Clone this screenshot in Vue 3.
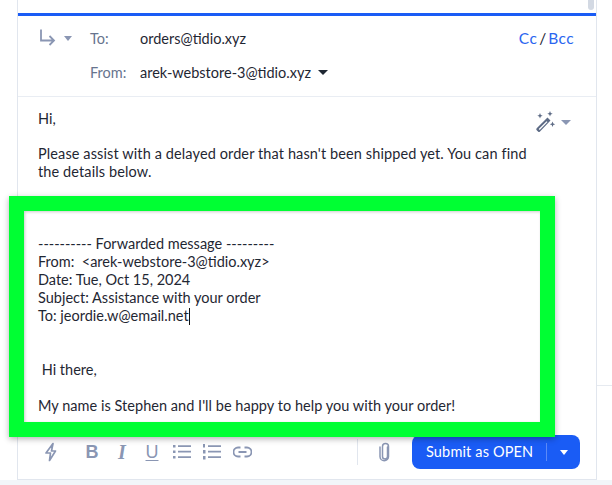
<script setup>
const forwarded = [
  '---------- Forwarded message ---------',
  'From:  <arek-webstore-3@tidio.xyz>',
  'Date: Tue, Oct 15, 2024',
  'Subject: Assistance with your order',
]
</script>

<template>
  <div class="page">
    <div class="scrollbar"></div>
    <div class="side-line"></div>
    <main class="card">
      <header class="recipients">
        <div class="row to-row">
          <div class="reply">
            <svg width="18" height="18" viewBox="0 0 18 18" fill="none" stroke="#8a96b3" stroke-width="1.8">
              <path d="M2 0.500V11.500H15M10.500 7l4.500 4.500-4.500 4.500" />
            </svg>
            <span class="caret grey"></span>
          </div>
          <span class="label">To:</span>
          <span class="value">orders@tidio.xyz</span>
          <span class="cc"><b>Cc</b><i>/</i><b>Bcc</b></span>
        </div>
        <div class="row from-row">
          <span class="label">From:</span>
          <span class="value">arek-webstore-3@tidio.xyz</span>
          <span class="caret dark"></span>
        </div>
      </header>
      <section class="body">
        <div class="hi-row">
          <p>Hi,</p>
          <div class="magic">
            <svg width="24" height="22" viewBox="0 0 24 22" fill="#5d6b85">
              <path d="M15.500 6.500l3 3L8 20.500a1.400 1.400 0 0 1-2 0l-1.300-1.300a1.400 1.400 0 0 1 0-2zM14.600 10.200l-7.900 7.800 1 1 7.800-7.900z" fill-rule="evenodd" />
              <path d="M8 2l.8 1.900 1.900.8-1.900.8L8 7.400l-.8-1.900-1.900-.8 1.900-.8zM18 0l.8 1.900 1.900.8-1.900.8-.8 1.900-.8-1.900-1.900-.8 1.900-.8zM20.500 10.500l.8 1.900 1.900.8-1.900.8-.8 1.900-.8-1.900-1.900-.8 1.900-.8z" />
            </svg>
            <span class="caret grey"></span>
          </div>
        </div>
        <p class="request">Please assist with a delayed order that hasn't been shipped yet. You can find the details below.</p>
      </section>
      <footer class="toolbar">
        <div class="tools">
          <svg class="bolt" width="16" height="20" viewBox="0 0 16 20" fill="none" stroke="#8a96b3" stroke-width="1.7" stroke-linejoin="round">
            <path d="M10 1.500L3 11h4.500l-1 7.500L12.500 9H8.500z" />
          </svg>
          <span class="fmt bold">B</span>
          <span class="fmt italic">I</span>
          <span class="fmt under">U</span>
          <svg width="18" height="16" viewBox="0 0 18 16" fill="#8a96b3">
            <path d="M0 1h2.500v2.500H0zM5 1.300h13v1.800H5zM0 6.500h2.500V9H0zM5 6.800h13v1.800H5zM0 12h2.500v2.500H0zM5 12.300h13v1.800H5z" />
          </svg>
          <svg width="18" height="16" viewBox="0 0 18 16" fill="#8a96b3">
            <path d="M0 0h2v3.500H0zM0 6h2.500v3.500H0zM0 12h2.500v3.500H0zM5 1.300h13v1.800H5zM5 6.800h13v1.800H5zM5 12.300h13v1.800H5z" />
          </svg>
          <svg width="19" height="12" viewBox="0 0 19 12" fill="none" stroke="#8a96b3" stroke-width="1.800">
            <path d="M7.500 1.500H5a4.500 4.500 0 0 0 0 9h2.500M11.500 1.500H14a4.500 4.500 0 0 1 0 9h-2.500M5.500 6h8" />
          </svg>
        </div>
        <div class="actions">
          <span class="vline"></span>
          <svg class="clip" width="14" height="20" viewBox="0 0 14 20" fill="none" stroke="#8a96b3" stroke-width="1.500" stroke-linecap="round">
            <path d="M9.500 5v9.500a2.500 2.500 0 0 1-5 0V4.500a3 3 0 0 1 6 0v10a4.200 4.200 0 0 1-8.500 0V5" />
          </svg>
          <button class="submit">
            <span class="submit-text">Submit as OPEN</span>
            <span class="submit-caret"><span class="caret white"></span></span>
          </button>
        </div>
      </footer>
    </main>
    <div class="bottom-strip"></div>
    <aside class="overlay">
      <p v-for="line in forwarded" :key="line">{{ line }}</p>
      <p>To: jeordie.w@email.net<span class="cursor"></span></p>
      <p class="gap"> Hi there,</p>
      <p class="last">My name is Stephen and I'll be happy to help you with your order!</p>
    </aside>
  </div>
</template>

<style scoped>
.page {
  position: relative;
  width: 612px;
  height: 485px;
  overflow: hidden;
  background: #fff;
  font-family: Lato, "Open Sans", sans-serif;
  font-size: 14.5px;
  color: #1f2733;
}
p { margin: 0; }
.scrollbar {
  position: absolute;
  left: 588px;
  top: 0;
  width: 6px;
  height: 10px;
  border-radius: 0 0 3px 3px;
  background: #d3d9e3;
}
.side-line {
  position: absolute;
  left: 597px;
  top: 385px;
  width: 15px;
  height: 1px;
  background: #e6eaf0;
}
.card {
  box-sizing: border-box;
  display: flex;
  flex-direction: column;
  margin-left: 17px;
  width: 580px;
  height: 480px;
  padding-top: 13px;
  border-left: 1px solid #e1e6ee;
  border-right: 1px solid #e1e6ee;
  border-bottom: 1px solid #e1e6ee;
}
.bottom-strip {
  height: 5px;
  background: #f2f5f9;
}
.recipients {
  border-top: 3px solid #1a5cf5;
  border-bottom: 1px solid #e9edf3;
  height: 80px;
  flex: none;
}
.row {
  display: flex;
  align-items: center;
  height: 20px;
}
.to-row { margin-top: 12px; padding-left: 21px; }
.from-row { margin-top: 14px; padding-left: 72px; }
.reply {
  display: flex;
  align-items: center;
  gap: 7px;
  width: 51px;
}
.label {
  width: 50px;
  color: #67748e;
}
.value { color: #1f2733; }
.from-row .caret {
  margin-left: 7px;
  border-left-width: 5.500px;
  border-right-width: 5.500px;
}
.cc {
  margin-left: auto;
  margin-right: 22px;
  display: flex;
  align-items: center;
  gap: 2px;
  font-size: 15.500px;
}
.cc b { font-weight: 400; color: #2a66f0; letter-spacing: 0.400px; }
.cc i { font-style: normal; }
.caret {
  display: inline-block;
  width: 0;
  height: 0;
  border-left: 4.500px solid transparent;
  border-right: 4.500px solid transparent;
  border-top: 5px solid #8a96b3;
}
.caret.dark { border-top-color: #1f2733; }
.caret.white { border-top-color: #fff; }
.body {
  flex: 1;
  padding: 13px 48px 0 20px;
  line-height: 18px;
}
.hi-row {
  display: flex;
  justify-content: space-between;
  align-items: flex-start;
  height: 18px;
  margin-right: -23px;
}
.magic {
  display: flex;
  align-items: center;
  gap: 5px;
  margin-top: 1px;
}
.magic svg { margin-right: 0; }
.magic .caret { border-left-width: 5px; border-right-width: 5px; }
.request { margin-top: 17px; letter-spacing: 0.110px; }
.toolbar {
  display: flex;
  justify-content: space-between;
  align-items: center;
  height: 36px;
  margin-bottom: 9px;
  padding: 0 16px 0 25px;
  flex: none;
}
.tools {
  display: flex;
  align-items: center;
  gap: 12px;
  color: #8a96b3;
}
.bolt { margin-right: 12px; }
.fmt {
  width: 18px;
  text-align: center;
  font-size: 18px;
  line-height: 20px;
  font-family: "Liberation Sans", sans-serif;
}
.bold { font-weight: 700; }
.italic { font-weight: 700; font-style: italic; font-size: 20px; font-family: "Liberation Serif", serif; }
.under { text-decoration: underline; text-underline-offset: 2px; }
.actions {
  display: flex;
  align-items: center;
}
.vline {
  width: 1px;
  height: 26px;
  background: #e1e6ee;
  margin-right: 20px;
}
.clip { margin-right: 20px; }
.submit {
  display: flex;
  align-items: center;
  height: 34px;
  width: 168px;
  padding: 0 0 0 14px;
  border: 0;
  border-radius: 8px;
  background: #1a5cf5;
  color: #fff;
  font: inherit;
}
.submit-text {
  flex: 1;
  text-align: left;
  line-height: 18px;
  letter-spacing: 0.150px;
  border-right: 1px solid #5c8af7;
}
.submit-caret {
  width: 33px;
  display: flex;
  justify-content: center;
}
.overlay {
  position: absolute;
  left: 9px;
  top: 196px;
  box-sizing: border-box;
  width: 546px;
  height: 241px;
  padding: 24px 0 0 14px;
  border: 15px solid #00ff33;
  background: #fff;
  box-shadow: 0 2px 6px rgba(0, 0, 0, 0.3), inset 1px 1px 3px rgba(0, 0, 0, 0.2);
  line-height: 18px;
  white-space: pre;
}
.cursor {
  display: inline-block;
  width: 1px;
  height: 17px;
  background: #111;
  vertical-align: -4px;
}
.gap { margin-top: 36px; }
.last { margin-top: 18px; letter-spacing: 0.030px; }
</style>
